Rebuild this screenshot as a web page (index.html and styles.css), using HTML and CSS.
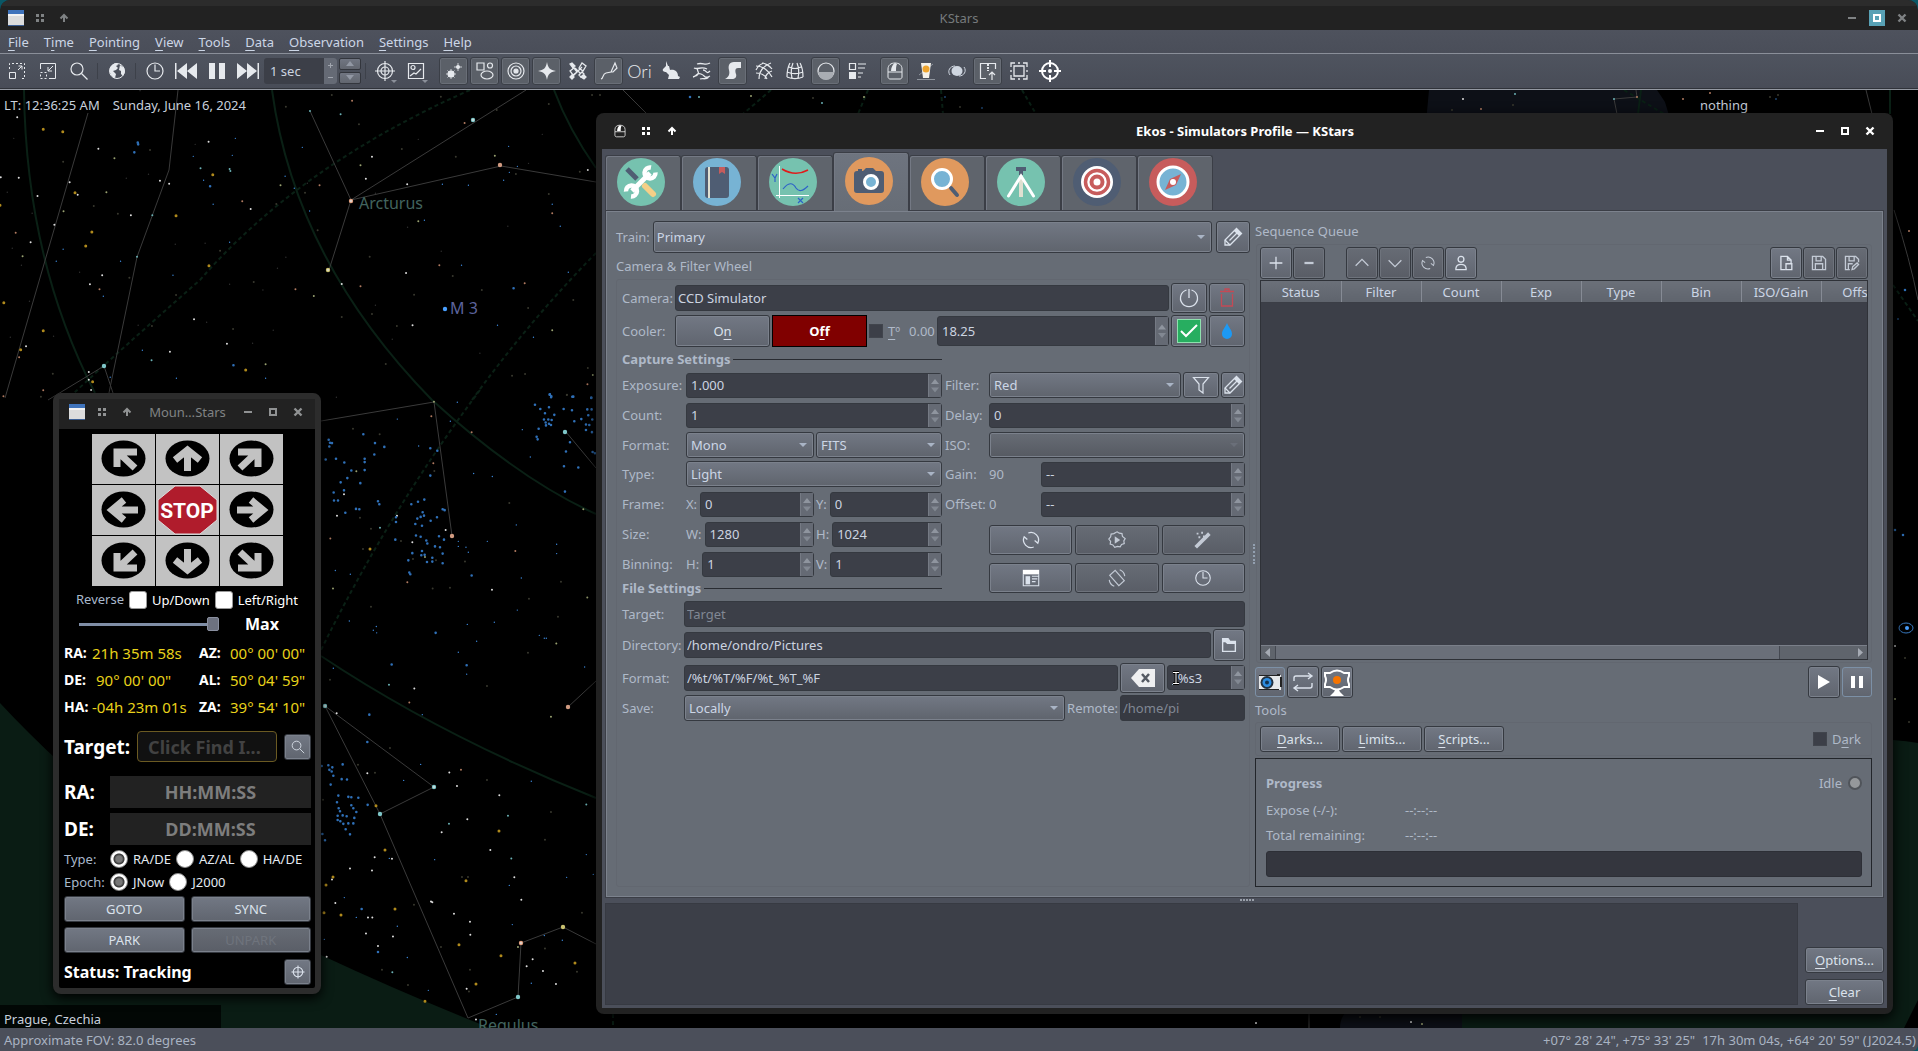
FILE: index.html
```html
<!DOCTYPE html>
<html lang="en">
<head>
<meta charset="utf-8">
<title>KStars</title>
<link rel="stylesheet" href="styles.css">
</head>
<body>
<svg class="defs" aria-hidden="true">
  <symbol id="i-app" viewBox="0 0 16 16"><path fill="#dcdcdc" d="M0 0h16v16H0z"/><path fill="#3f73bb" d="M0 0h16v4H0z"/><path fill="#f2f2f2" d="M0 4h16v2H0z"/><path fill="#3a5d92" d="M0 15h16v1H0z"/></symbol>
  <symbol id="i-dots" viewBox="0 0 16 16"><path fill="currentColor" d="M4 4h3v3H4zM9 4h3v3H9zM4 9h3v3H4zM9 9h3v3H9z"/></symbol>
  <symbol id="i-up" viewBox="0 0 16 16"><path fill="none" stroke="currentColor" stroke-width="2" d="M8 12V5M4.500 8.500 8 5l3.500 3.500"/></symbol>
  <symbol id="i-min" viewBox="0 0 16 16"><path fill="currentColor" d="M4 7h8v2H4z"/></symbol>
  <symbol id="i-max" viewBox="0 0 16 16"><path fill="none" stroke="currentColor" stroke-width="2" d="M5 5h6v6H5z"/></symbol>
  <symbol id="i-close" viewBox="0 0 16 16"><path fill="none" stroke="currentColor" stroke-width="2.400" d="m4.500 4.500 7 7m0-7-7 7"/></symbol>
  <symbol id="i-dome" viewBox="0 0 22 22"><path fill="none" stroke="currentColor" d="M4 12V9c0-4 3-6 7-6s7 2 7 6v8c0 1-1 2-2 2H6c-1 0-2-1-2-2zh14"/><path fill="currentColor" d="M7 11c0-4 2-7 4-8l2 1c-1 2-1 4-1 7z"/></symbol>
  <symbol id="i-search" viewBox="0 0 22 22"><g fill="none" stroke="currentColor" stroke-width="1.200"><circle cx="9" cy="9" r="6"/><path d="m13.500 13.500 6 6"/></g></symbol>
  <symbol id="i-clock" viewBox="0 0 22 22"><g fill="none" stroke="currentColor" stroke-width="1.200"><circle cx="11" cy="11" r="8"/><path d="M11 4.500V11h5"/></g></symbol>
  <symbol id="i-refresh" viewBox="0 0 22 22"><g fill="none" stroke="currentColor" stroke-width="1.400"><path d="M8 3.300A8.300 8.300 0 0 1 18.500 14.500L15 11.500M14 18.700A8.300 8.300 0 0 1 3.500 7.500L7 10.500"/></g></symbol>
  <symbol id="i-pencil" viewBox="0 0 22 22"><g fill="none" stroke="currentColor" stroke-width="1.300"><path d="M3 19v-5L14.500 2.500l5 5L8 19z"/><path d="M3 14l5 5M7.500 14.500l8.500-8.500"/></g><path fill="currentColor" d="m12 5 2.500-2.500 5 5L17 10z"/></symbol>
  <symbol id="i-spin" viewBox="0 0 10 22"><path fill="currentColor" d="m5 4.500 4 5H1z"/><path fill="currentColor" opacity=".7" d="m5 18 4-5H1z"/></symbol>
  <symbol id="i-arrow" viewBox="0 0 63 50"><path fill="#c2c2c2" d="M0 0h63v50H0z"/><ellipse cx="31.500" cy="24.500" rx="22" ry="18"/></symbol>
  <symbol id="i-shaft" viewBox="0 0 63 50"><path fill="none" stroke="#c2c2c2" stroke-width="7" d="M31.500 37V16M19 26l12.500-10L44 26"/></symbol>
  <symbol id="i-diag" viewBox="0 0 63 50"><path fill="none" stroke="#c2c2c2" stroke-width="7" d="M43 34 27 19M25 33V18h20"/></symbol>
  <symbol id="i-target" viewBox="0 0 22 22"><g fill="none" stroke="currentColor" stroke-width="1.200"><circle cx="11" cy="11" r="7.500"/><circle cx="11" cy="11" r="4"/><path d="M11 1v20M1 11h20"/></g></symbol>
</svg>

<div class="app">
  <header class="titlebar">
    <div class="tb-icons"><svg class="i16"><use href="#i-app"/></svg><svg class="i16"><use href="#i-dots"/></svg><svg class="i16"><use href="#i-up"/></svg></div>
    <h1>KStars</h1>
    <div class="tb-buttons">
      <button aria-label="Minimize"><svg class="i16"><use href="#i-min"/></svg></button>
      <button class="hot" aria-label="Maximize"><svg class="i16"><use href="#i-max"/></svg></button>
      <button aria-label="Close"><svg class="i16"><use href="#i-close"/></svg></button>
    </div>
  </header>

  <nav class="menubar">
    <a href="#"><u>F</u>ile</a><a href="#">T<u>i</u>me</a><a href="#"><u>P</u>ointing</a><a href="#"><u>V</u>iew</a><a href="#"><u>T</u>ools</a><a href="#"><u>D</u>ata</a><a href="#"><u>O</u>bservation</a><a href="#"><u>S</u>ettings</a><a href="#"><u>H</u>elp</a>
  </nav>

  <div class="toolbar">
    <button aria-label="Zoom in"><svg class="i22" viewBox="0 0 22 22" fill="none" stroke="currentColor"><path stroke-dasharray="2 2" d="M3.500 9V3.500h15v15H14"/><path d="M3.500 12.500h6v6h-6zM12 10l4-4M12.500 6H16v3.500"/></svg></button>
    <button aria-label="Zoom out"><svg class="i22" viewBox="0 0 22 22" fill="none" stroke="currentColor"><path d="M3.500 9V3.500h15v15H12M16 6l-5 5M11 7v4h4"/><path stroke-dasharray="2 2" d="M3.500 12.500h6v6h-6z"/></svg></button>
    <button aria-label="Find"><svg class="i22"><use href="#i-search"/></svg></button>
    <i class="sep"></i>
    <button aria-label="Location"><svg class="i22" viewBox="0 0 22 22"><circle cx="11" cy="11" r="7.500" fill="none" stroke="currentColor"/><path fill="currentColor" d="M4 8c1-3 4-5 7-5l1 2-2 1 2 2-2 2-3 1 3 3-1 4C5 17 3 12 4 8zM14 5l4 3 1 4-2 4-2-2v-3l-2-1z"/></svg></button>
    <i class="sep"></i>
    <button aria-label="Set time"><svg class="i22"><use href="#i-clock"/></svg></button>
    <button aria-label="Step back"><svg class="i24" viewBox="0 0 24 24" fill="currentColor"><path d="M1 4h1.500v16H1zM13 4v16L3 12zM23 4v16l-10-8z"/></svg></button>
    <button aria-label="Pause clock"><svg class="i24" viewBox="0 0 24 24" fill="currentColor"><path d="M4 4h6v16H4zM14 4h6v16h-6z"/></svg></button>
    <button aria-label="Step forward"><svg class="i24" viewBox="0 0 24 24" fill="currentColor"><path d="M21.500 4H23v16h-1.500zM11 4v16l10-8zM1 4v16l10-8z"/></svg></button>
    <div class="timestep"><input aria-label="Time step" value="1 sec"><svg viewBox="0 0 13 28"><path fill="#656a75" d="M0 0h13v28H0z"/><path stroke="#a0a5ae" d="M4 7.500h5M6.500 5v5M4 19.500h5"/></svg></div>
    <div class="stepbtns"><button aria-label="Longer step"><svg viewBox="0 0 8 5"><path d="m4 0 4 5H0z"/></svg></button><button aria-label="Shorter step"><svg viewBox="0 0 8 5"><path d="m4 5 4-5H0z"/></svg></button></div>
    <i class="sep"></i>
    <button class="more" aria-label="Telescope"><svg class="i22"><use href="#i-target"/></svg></button>
    <button class="more" aria-label="Image"><svg class="i22" viewBox="0 0 22 22" fill="none" stroke="currentColor" stroke-width="1.200"><path d="M3.500 3.500h15v15h-15zM5 16l4-3 2 1 5-5"/><circle cx="8" cy="7.500" r="2"/></svg></button>
    <i class="sep clear"></i>
    <button class="on" aria-label="Stars"><svg class="i22" viewBox="0 0 22 22" fill="currentColor"><circle cx="8" cy="14" r="3.500"/><circle cx="15" cy="7" r="2"/><path fill="none" stroke="currentColor" stroke-width=".800" d="M8 9v10M3 14h10M4.500 10.500l7 7m0-7-7 7M15 3v8M11 7h8"/></svg></button>
    <button class="on" aria-label="Deep sky"><svg class="i22" viewBox="0 0 22 22" fill="none" stroke="currentColor" stroke-width="1.200"><path d="M3 3h7v7H3z"/><circle cx="16" cy="5.500" r="2.500"/><ellipse cx="13" cy="15" rx="6" ry="4"/></svg></button>
    <button class="on" aria-label="Solar system"><svg class="i22" viewBox="0 0 22 22" fill="none" stroke="currentColor" stroke-width="1.200"><circle cx="11" cy="11" r="8"/><circle cx="11" cy="11" r="5"/><circle cx="11" cy="11" r="2" fill="currentColor"/></svg></button>
    <button class="on" aria-label="Supernovae"><svg class="i22" viewBox="0 0 22 22" fill="currentColor"><path d="M11 2c1 6 3 8 9 9-6 1-8 3-9 9-1-6-3-8-9-9 6-1 8-3 9-9z"/></svg></button>
    <button aria-label="Satellites"><svg class="i22" viewBox="0 0 22 22" fill="none" stroke="currentColor" stroke-width="1.300"><path d="m6 16 9-9M8 8l6 6M3 11l4-3 3 4-4 3zM12 8l3-5 4 3-3 5zM12 15l3-3 2 2-3 3z"/><path fill="currentColor" d="M3 4l2-1 3 3-2 2zM14 17l3-2 2 2-2 2zM3 17l2-2 2 2-2 2z"/></svg></button>
    <button class="on" aria-label="Constellation lines"><svg class="i22" viewBox="0 0 22 22" fill="none" stroke="currentColor" stroke-width="1.200"><path d="M3 19c3-1 1-5 5-6l5-1 4-9 2 5-4 4-2 0"/></svg></button>
    <button class="word" aria-label="Constellation names">Ori</button>
    <button aria-label="Constellation art"><svg class="i22" viewBox="0 0 22 22" fill="currentColor"><path d="M6 1l2 5 1 0 1 4c5-1 8 2 8 6l2 1-1 2H8l1-4-3-3c-2 0-4-1-3-3l3-3z"/></svg></button>
    <button aria-label="Boundaries"><svg class="i22" viewBox="0 0 22 22" fill="none" stroke="currentColor" stroke-width="1.300"><path d="M6 4c6-2 8 2 13-1M3 8c4 2 7-2 13 1M7 8c-3 3 4 4-2 8M2 17c5-1 3-5 8-3s3 5 9 2M12 10c4 0 3 5 7 1M9 19c3-1 6 1 9-2"/></svg></button>
    <button class="on" aria-label="Milky way"><svg class="i22" viewBox="0 0 22 22" fill="currentColor"><path d="M3 19c4-2 5-5 4-9s0-8 5-8h7v6h-3c-3 0-3 3-2 6s-1 5-4 5z"/></svg></button>
    <button aria-label="Equatorial grid"><svg class="i22" viewBox="0 0 22 22" fill="none" stroke="currentColor" stroke-width="1.200"><path d="M3 6c7 0 13 5 16 11M3 13c5 0 9 2 11 6M9 3c3 0 8 3 10 6M6 19C6 12 10 6 18 3M3 10c2-4 4-6 8-7M12 19c0-3 3-7 7-8"/></svg></button>
    <button aria-label="Horizontal grid"><svg class="i22" viewBox="0 0 22 22" fill="none" stroke="currentColor" stroke-width="1.200"><path d="M3 17C3 8 5 5 6 3M19 17c0-9-2-12-3-14M3 17c5 2 11 2 16 0M3 12c5 2 11 2 16 0M5 7c4 2 8 2 12 0M9 3C7 8 7 14 8 18M13 3c2 5 2 11 1 15"/></svg></button>
    <button class="on" aria-label="Ground"><svg class="i22" viewBox="0 0 22 22"><circle cx="11" cy="11" r="8" fill="none" stroke="currentColor" stroke-width="1.200"/><path fill="#a9adb3" d="M3 12h16a8 8 0 0 1-16 0z"/></svg></button>
    <button aria-label="What is up"><svg class="i22" viewBox="0 0 22 22"><path fill="none" stroke="currentColor" stroke-width="1.200" d="M3.500 3.500h6v6h-6zM12 4h8M12 8h7M12 13h5M12 17h3"/><path fill="currentColor" d="M3 12h7v7H3z"/></svg></button>
    <i class="sep clear"></i>
    <button class="on" aria-label="Ekos"><svg class="i22"><use href="#i-dome"/></svg></button>
    <button aria-label="XPlanet"><svg class="i22" viewBox="0 0 22 22"><path stroke="#8f959e" fill="none" d="M4 15 18 4M2 19.500h18"/><path fill="#f4f1ea" d="M6 3h10l-2 15H8z"/><circle cx="11" cy="9" r="3.500" fill="#efa52f"/></svg></button>
    <button aria-label="Galaxy"><svg class="i22" viewBox="0 0 22 22"><ellipse cx="11" cy="11" rx="5.500" ry="5" fill="#cfd6e0"/><path fill="none" stroke="#cfd6e0" d="M4 15c-3-4 0-9 5-9M18 7c3 4 0 9-5 9"/></svg></button>
    <button class="on" aria-label="Export"><svg class="i22" viewBox="0 0 22 22" fill="none" stroke="currentColor" stroke-width="1.200"><path d="M9 18.500H3.500v-15h15V9M15 20v-8M12 15l3-3 3 3"/><path stroke-dasharray="2 1" stroke-width="2" d="M11 4v7"/></svg></button>
    <button aria-label="Field of view"><svg class="i22" viewBox="0 0 22 22" fill="none" stroke="currentColor" stroke-width="1.300"><path d="M6 6h10v10H6zM3 7V3h4M15 3h4v4M19 15v4h-4M7 19H3v-4M10 3h2M10 19h2M3 10v2M19 10v2"/></svg></button>
    <button aria-label="Center"><svg class="i24" viewBox="0 0 24 24" fill="none" stroke="#fff" stroke-width="2"><circle cx="12" cy="12" r="8"/><path d="M12 1v7M12 16v7M1 12h7M16 12h7"/><circle cx="12" cy="12" r="1" fill="#fff"/></svg></button>
  </div>

  <main class="sky">
    <svg class="map" viewBox="0 90 1918 938" preserveAspectRatio="xMinYMin slice" aria-hidden="true">
      <path fill="#0a1c14" d="M0 703Q50 757 120 815 220 895 321 955 400 992 490 1028H0zM1422 1028 1500 740h393q14 1 25 3v257l-14 28z"/>
      <path fill="#0d1017" d="M1429 90h228l8 12 6 20h-245zM1340 1028q0-14 12-20h110v20z"/>
      <path fill="#000" opacity=".75" d="M0 1005h221v23H0z"/>
      <g fill="none" stroke="#0a2015" stroke-width="2">
        <path d="M24 90Q26 260 95 393M272 90Q295 260 432 400 520 480 596 514M554 90q15 40 42 78M321 656q120 80 275 142M1641 90l-3 24M1890 90v24"/>
        <path stroke-dasharray="4 3" d="M470 90Q300 165 200 280 120 350 74 393M596 253Q530 320 472 400M480 390Q390 510 321 650M771 90l-28 24M868 90l-10 24M941 90l2 24M1022 90l14 24M1624 90l40 24M1893 285l25 36M613 1014v14"/>
      </g>
      <g fill="none" stroke="#3a3a3a">
        <path d="M178 90l-9 80-32 87-33 160M88 113 5 398M310 111l41 89-22 70M351 200l175-110M351 200l150-34 95 16M104 366l-56 34M104 366l10 30M623 90l24 24M1894 210q16 50 24 90M1866 90l6 24M1614 99l23-2M1614 99l3 15M1636 90l1 7M1309 1014v14"/>
        <path d="M321 421l113-19 18 134M566 432l30 36M325 706l109 81-54 27-55-108M380 814l88 204 50-21 3-54 42-16 33 17M568 707l28-26"/>
      </g>
      <g transform="translate(0 90) scale(.3827 .3333)" class="dots">
        <path class="w" d="M45 82h0M257 176h0M2 262h0M49 263h0M182 277h0M442 281h0M98 318h0M203 314h0M342 376h0M142 404h0M80 457h0M267 556h0M235 583h0M507 688h0M655 357h0M545 155h0M972 200h0M956 266h0M1064 283h0M1536 240h0M1061 549h0M1078 706h0M893 582h0M593 761h0M444 785h0M68 769h0M232 846h0M232 869h0M238 900h0M418 272h0"/>
        <path class="y" d="M113 118h0M164 125h0M556 254h0M196 308h0M240 426h0M224 468h0M460 377h0M546 527h0M10 638h0M113 722h0M54 779h0M642 840h0M242 875h0M0 346h0"/>
        <path class="g" d="M299 205h0M278 307h0M166 364h0M59 499h0M942 226h0M1293 197h0M1093 394h0M820 618h0M694 823h0M1549 855h0M1443 721h0M733 286h0"/>
        <path class="o" d="M920 32h0M835 286h0M633 334h0M41 428h0M260 598h0M772 598h0M942 589h0M1148 526h0M1371 580h0M1443 370h0M1535 883h0M50 802h0M113 901h0M1214 99h0M9 919h0"/>
        <path class="b" d="M769 295h0M505 199h0M607 196h0M615 145h0M790 172h0M745 259h0M532 271h0M557 343h0M809 363h0M1329 169h0M1352 229h0M1331 247h0M1316 271h0M1156 283h0M1224 286h0M1109 391h0M1206 526h0M1485 547h0M1443 343h0M1464 409h0M1300 706h0M1394 742h0M165 478h0M147 514h0M315 514h0M270 619h0M452 556h0M372 781h0M461 865h0M694 865h0M600 457h0M288 862h0"/>
        <path class="c" d="M360 158h0M361 163h0M351 187h0M549 289h0M610 826h0M1342 595h0M1437 913h0M1440 922h0M1498 920h0M1545 924h0"/>
        <path class="t" d="M810 63h0M890 73h0M524 235h0M602 243h0M398 376h0M358 500h0M396 811h0M600 237h0"/>
        <path class="d" d="M165 215h0M392 180h0M245 348h0M308 371h0M722 342h0M797 308h0M830 421h0M938 103h0M1050 177h0M1152 20h0M1191 200h0M1298 60h0M1348 252h0M1434 42h0M1434 312h0M1515 245h0M966 500h0M1183 558h0M1082 614h0M1259 600h0M893 681h0M972 672h0M1037 708h0M1008 822h0M1338 857h0M1372 852h0M1380 654h0M1498 630h0M1481 915h0M663 576h0M575 482h0M609 717h0M397 708h0M460 615h0M338 563h0M138 851h0M107 920h0M747 50h0M867 15h0M1536 834h0M1547 15h0"/>
        <path class="f" d="M36 145h0M330 265h0M510 163h0M388 253h0M458 463h0M536 460h0M725 535h0M747 502h0M687 600h0M540 697h0M714 721h0M660 760h0M600 583h0M208 547h0M84 370h0M19 307h0M32 475h0M56 526h0M77 634h0M27 742h0M140 739h0M361 706h0M1065 412h0M1153 484h0M981 646h0M1025 748h0M1327 409h0M1381 220h0M1417 133h0M1093 148h0M803 280h0M366 2h0M981 310h0M879 922h0M1254 790h0"/>
      </g>
      <g transform="translate(310 390) scale(.3333 .4216)" class="dots">
        <path class="w" d="M102 247h0M81 298h0M261 298h0M307 361h0M407 332h0M546 474h0M313 708h0M80 767h0M172 909h0M418 907h0M441 939h0M568 961h0M472 1018h0M395 1049h0M541 1091h0M194 1108h0M246 1112h0M120 1135h0M186 1140h0M66 1161h0M613 1156h0M634 1209h0M76 1217h0M363 1213h0M367 1215h0M432 1242h0M174 1251h0M187 1251h0M480 1261h0M168 1289h0M481 1292h0M249 1296h0M204 1319h0M50 1344h0M668 1350h0M650 1367h0M699 1378h0M738 1409h0M470 1420h0M498 1493h0"/>
        <path class="y" d="M180 377h0M198 986h0M225 1091h0M567 1046h0M468 1164h0M69 1155h0M48 1174h0M42 1240h0M93 1245h0M255 1231h0M447 1316h0M573 1342h0M795 1359h0M498 1409h0M345 1450h0"/>
        <path class="g" d="M69 471h0M345 396h0M372 28h0M139 193h0M739 601h0M723 775h0M820 283h0M832 492h0M624 1321h0"/>
        <path class="o" d="M364 62h0M370 174h0M485 100h0M61 352h0M292 456h0M616 382h0M298 741h0M453 901h0"/>
        <path class="t" d="M210 327h0M237 699h0M417 1029h0M594 1010h0M829 983h0M604 1111h0M247 1381h0"/>
        <path class="c" d="M56 118h0M60 125h0M58 134h0M66 126h0M160 105h0M195 126h0M223 135h0M47 165h0M78 163h0M193 153h0M164 163h0M164 171h0M103 172h0M164 190h0M124 191h0M112 209h0M92 219h0M151 221h0M102 238h0M71 243h0M72 262h0M84 262h0M138 282h0M148 283h0M106 291h0M204 264h0M208 271h0M361 138h0M382 144h0M361 203h0M304 271h0M343 260h0M324 265h0M338 290h0M342 298h0M322 305h0M332 301h0M316 318h0M336 322h0M362 310h0M381 302h0M398 283h0M404 285h0M258 313h0M258 302h0M256 355h0M318 345h0M332 348h0M349 357h0M352 364h0M387 347h0M402 355h0M375 371h0M390 373h0M307 387h0M336 382h0M334 392h0M344 391h0M367 398h0M398 388h0M295 404h0M351 408h0M367 407h0M398 411h0M298 433h0M301 437h0M485 440h0M377 576h0M245 651h0M470 653h0M178 770h0M172 835h0M719 11h0M724 15h0M787 16h0M844 18h0M675 35h0M717 41h0M691 45h0M761 45h0M786 48h0M832 46h0M845 46h0M705 55h0M733 59h0M835 60h0M702 70h0M715 70h0M725 71h0M707 77h0M717 80h0M708 84h0M723 83h0M686 92h0M793 74h0M814 69h0M847 70h0M828 82h0M838 83h0M828 95h0M846 100h0M680 111h0M683 117h0M780 124h0M768 146h0M848 147h0M855 150h0M762 181h0M805 184h0M765 241h0M35 892h0M55 890h0M67 895h0M58 901h0M65 905h0M70 915h0M98 888h0M95 923h0M111 924h0M62 936h0M85 962h0M115 965h0M124 966h0M145 967h0M81 978h0M173 984h0M124 985h0M86 992h0M90 999h0M130 992h0M139 1001h0M98 1009h0M83 1010h0M110 1011h0M133 1015h0M83 1020h0M91 1023h0M100 1029h0M115 1028h0M130 1028h0M107 1042h0M120 1054h0M37 1053h0M45 1068h0M155 1231h0M204 1333h0"/>
        <path class="b" d="M76 428h0M121 437h0M491 198h0M547 205h0M619 320h0M532 359h0M445 359h0M445 371h0M468 373h0M475 385h0M740 366h0M740 388h0M634 446h0M622 522h0M553 551h0M472 556h0M500 596h0M445 622h0M688 582h0M703 589h0M709 589h0M470 674h0M824 657h0M337 770h0M332 888h0M281 926h0M664 928h0M829 1102h0M770 1156h0M598 1175h0M374 1114h0M238 1111h0M103 1204h0M139 1251h0M262 1272h0M43 1303h0M292 1346h0M355 1424h0M607 1268h0M703 1294h0M757 1305h0M850 1149h0M664 1407h0M559 1481h0M199 561h0M190 570h0M200 576h0M118 548h0M262 69h0M326 133h0M442 29h0M661 159h0M637 94h0M70 660h0M421 74h0"/>
        <path class="d" d="M129 92h0M209 105h0M183 329h0M159 377h0M150 303h0M183 514h0M273 358h0M309 401h0M378 404h0M368 471h0M420 469h0M465 407h0M598 268h0M657 495h0M753 455h0M744 538h0M654 623h0M531 702h0M60 687h0M240 849h0M144 889h0M195 908h0M531 925h0M705 1067h0M723 1001h0M456 1155h0M474 1155h0M312 1221h0M393 1321h0M216 1375h0M480 1375h0M294 1411h0M477 1427h0M705 1325h0M801 1380h0M816 1240h0M771 11h0M373 192h0M39 972h0"/>
      </g>
      <g class="stars">
        <path stroke="#e0a080" d="M351 201h0M521 943h0"/><path stroke="#7ec6c8" d="M473 120h0M104 366h0M565 432h0M325 706h0M434 787h0M380 814h0M518 997h0"/><path stroke="#c8c070" d="M328 270h0M563 927h0"/><path stroke="#4aa0ff" d="M445 309h0"/><path stroke="#d09a80" d="M500 165h0M452 536h0M568 707h0"/>
      </g>
      <g class="dots"><path class="w" d="M351 201h0M473 120h0M521 943h0M325 706h0M434 787h0M328 270h0M1463 99h0M1256 1023h0"/><path class="t" d="M699 97h0M822 103h0M1614 99h0M1515 94h0"/><path class="g" d="M864 97h0M751 96h0M1422 1024h0M1895 699h0"/><path class="o" d="M1481 109h0M1637 97h0M1683 99h0M1710 93h0M1909 231h0"/><path class="c" d="M690 97h0M1905 290h0M1903 535h0M1895 530h0"/><path class="b" d="M945 97h0M982 108h0M1776 99h0M1898 319h0"/><path class="d" d="M813 98h0M600 95h0M960 107h0M1452 110h0M1513 105h0M1770 97h0M1778 95h0M1905 658h0M1909 722h0M1380 1017h0M1360 1017h0"/><path class="w" d="M1895 646h0M1411 1022h0"/></g>
      <ellipse cx="1906" cy="628" rx="7" ry="5" fill="none" stroke="#3a7cc4"/><circle cx="1907" cy="628" r="2" fill="#4aa0ff"/>
      <g class="names"><text x="359" y="209" fill="#42645f">Arcturus</text><text x="450" y="314" fill="#5c639c">M 3</text><text x="478" y="1031" fill="#42645f">Regulus</text></g>
    </svg>

    <div class="info"><span>LT: 12:36:25 AM</span><span>Sunday, June 16, 2024</span></div>
    <div class="focus">nothing</div>
    <div class="place">Prague, Czechia</div>

    <section class="mount">
      <header>
        <svg class="i16"><use href="#i-app"/></svg><svg class="i16"><use href="#i-dots"/></svg><svg class="i16"><use href="#i-up"/></svg>
        <h2>Moun…Stars</h2>
        <button aria-label="Minimize"><svg class="i16"><use href="#i-min"/></svg></button><button aria-label="Maximize"><svg class="i16"><use href="#i-max"/></svg></button><button aria-label="Close"><svg class="i16"><use href="#i-close"/></svg></button>
      </header>
      <div class="mbody">
        <div class="pad">
          <button aria-label="Up left"><svg viewBox="0 0 63 50"><use href="#i-arrow"/><use href="#i-diag"/></svg></button>
          <button aria-label="Up"><svg viewBox="0 0 63 50"><use href="#i-arrow"/><use href="#i-shaft"/></svg></button>
          <button aria-label="Up right"><svg viewBox="0 0 63 50"><use href="#i-arrow"/><g transform="matrix(-1 0 0 1 63 0)"><use href="#i-diag"/></g></svg></button>
          <button aria-label="Left"><svg viewBox="0 0 63 50"><use href="#i-arrow"/><path class="arr" d="M46 25H20M32 15 20 25l12 10"/></svg></button>
          <button aria-label="Stop"><svg viewBox="0 0 63 50"><path fill="#c2c2c2" d="M0 0h63v50H0z"/><path fill="#b01c2c" stroke="#ddd" d="M19 1h25l17 14v20L44 49H19L2 35V15z"/><text x="31" y="33" class="stop">STOP</text></svg></button>
          <button aria-label="Right"><svg viewBox="0 0 63 50"><use href="#i-arrow"/><path class="arr" d="M17 25h26M31 15l12 10-12 10"/></svg></button>
          <button aria-label="Down left"><svg viewBox="0 0 63 50"><use href="#i-arrow"/><g transform="matrix(1 0 0 -1 0 50)"><use href="#i-diag"/></g></svg></button>
          <button aria-label="Down"><svg viewBox="0 0 63 50"><use href="#i-arrow"/><g transform="matrix(1 0 0 -1 0 50)"><use href="#i-shaft"/></g></svg></button>
          <button aria-label="Down right"><svg viewBox="0 0 63 50"><use href="#i-arrow"/><g transform="matrix(-1 0 0 -1 63 50)"><use href="#i-diag"/></g></svg></button>
        </div>
        <div class="reverse"><span>Reverse</span><label><input type="checkbox">Up/Down</label><label><input type="checkbox">Left/Right</label></div>
        <div class="speed"><input type="range" aria-label="Slew speed" min="0" max="9" value="9"><b>Max</b></div>
        <dl class="coords">
          <dt>RA:</dt><dd>21h 35m 58s</dd><dt>AZ:</dt><dd>00° 00' 00"</dd>
          <dt>DE:</dt><dd class="mid">90° 00' 00"</dd><dt>AL:</dt><dd>50° 04' 59"</dd>
          <dt>HA:</dt><dd>-04h 23m 01s</dd><dt>ZA:</dt><dd>39° 54' 10"</dd>
        </dl>
        <div class="mtarget"><label for="mt">Target:</label><input id="mt" placeholder="Click Find I..."><button class="btn sq" aria-label="Find"><svg class="i16"><use href="#i-search"/></svg></button></div>
        <div class="mcoord"><label for="mra">RA:</label><input id="mra" placeholder="HH:MM:SS"></div>
        <div class="mcoord"><label for="mde">DE:</label><input id="mde" placeholder="DD:MM:SS"></div>
        <div class="radios"><span>Type:</span><label><input type="radio" name="ty" checked>RA/DE</label><label><input type="radio" name="ty">AZ/AL</label><label><input type="radio" name="ty">HA/DE</label></div>
        <div class="radios"><span>Epoch:</span><label><input type="radio" name="ep" checked>JNow</label><label><input type="radio" name="ep">J2000</label></div>
        <div class="mbtns"><button class="btn">GOTO</button><button class="btn">SYNC</button><button class="btn">PARK</button><button class="btn" disabled>UNPARK</button></div>
        <div class="mstatus"><b>Status: Tracking</b><button class="btn sq" aria-label="Center on mount"><svg class="i16" viewBox="0 0 22 22" fill="none" stroke="currentColor" stroke-width="1.500"><circle cx="11" cy="11" r="6.500"/><path d="M11 2v18M2 11h18"/></svg></button></div>
      </div>
    </section>

    <section class="ekos">
      <header>
        <div class="tb-icons"><svg class="i16"><use href="#i-dome"/></svg><svg class="i16"><use href="#i-dots"/></svg><svg class="i16"><use href="#i-up"/></svg></div>
        <h2>Ekos - Simulators Profile — KStars</h2>
        <div class="tb-buttons"><button aria-label="Minimize"><svg class="i16"><use href="#i-min"/></svg></button><button aria-label="Maximize"><svg class="i16"><use href="#i-max"/></svg></button><button aria-label="Close"><svg class="i16"><use href="#i-close"/></svg></button></div>
      </header>
      <div class="ebody">
        <div class="tabs">
          <button aria-label="Setup"><svg viewBox="0 0 48 48"><circle cx="24" cy="24" r="24" fill="#76c2af"/><path stroke="#4f5d73" stroke-width="5" d="m10 11 10 10"/><path stroke="#f5cf87" stroke-width="6" stroke-linecap="round" d="m28 28 8 8"/><path stroke="#fff" stroke-width="5" d="M15 33 33 15"/><path stroke="#fff" stroke-width="4.500" fill="none" d="M34 9.500a5.500 5.500 0 1 0 4.500 5M14 38.500a5.500 5.500 0 1 0-5-5"/></svg></button>
          <button aria-label="Scheduler"><svg viewBox="0 0 48 48"><circle cx="24" cy="24" r="24" fill="#77b3d4"/><rect x="12" y="9" width="24" height="31" rx="3" fill="#4f5d73"/><path fill="#e0e0d1" d="M15 9h2v31h-2z"/><path fill="#c75c5c" d="M26 9h6v7l-3-2-3 2z"/></svg></button>
          <button aria-label="Analyze"><svg viewBox="0 0 48 48"><circle cx="24" cy="24" r="24" fill="#76c2af"/><path fill="none" stroke="#fff" d="M10.500 8v32M7 37.500h33"/><path fill="none" stroke="#e01b1b" stroke-width="1.500" d="M13 11q13 8 26 1"/><path fill="none" stroke="#2d62c8" stroke-width="1.200" d="M14 31q8-10 13-1 4 6 12-2M3 16l3 4 2-4M6 20v4M29 40l5 5m0-5-5 5"/></svg></button>
          <button class="sel" aria-label="Capture"><svg viewBox="0 0 48 48"><circle cx="24" cy="24" r="24" fill="#e0995e"/><path fill="#4f5d73" d="M9 17q0-3 3-3h1v-2h4v2h1l3-3h7l3 3h5q3 0 3 3v16q0 3-3 3H12q-3 0-3-3z"/><circle cx="26" cy="25" r="6.500" fill="#77b3d4" stroke="#fff" stroke-width="3"/></svg></button>
          <button aria-label="Focus"><svg viewBox="0 0 48 48"><circle cx="24" cy="24" r="24" fill="#e0995e"/><path stroke="#4f5d73" stroke-width="4" stroke-linecap="round" d="m30 30 6 7"/><circle cx="21" cy="21" r="9.500" fill="#77b3d4" stroke="#fff" stroke-width="3"/></svg></button>
          <button aria-label="Mount"><svg viewBox="0 0 48 48"><circle cx="24" cy="24" r="24" fill="#76c2af"/><path fill="#4f5d73" d="M19 9h10v4h-3v4h-4v-4h-3z"/><path stroke="#e0e0d1" stroke-width="4" d="M24 21v18"/><path fill="none" stroke="#fff" stroke-width="3" stroke-linecap="round" d="M11.500 38 24 18l12.500 20"/></svg></button>
          <button aria-label="Align"><svg viewBox="0 0 48 48"><circle cx="24" cy="24" r="24" fill="#4f5d73"/><circle cx="24" cy="24" r="16" fill="#fff"/><circle cx="24" cy="24" r="11.500" fill="none" stroke="#c75c5c" stroke-width="3.500"/><circle cx="24" cy="24" r="5.500" fill="none" stroke="#c75c5c" stroke-width="4"/></svg></button>
          <button aria-label="Guide"><svg viewBox="0 0 48 48"><circle cx="24" cy="24" r="24" fill="#c75c5c"/><circle cx="24" cy="24" r="15" fill="#77b3d4" stroke="#fff" stroke-width="3"/><path fill="#c75c5c" d="m32 16-5 11-3-3zM32 16l-11 5 3 3zM16 32l5-11 6 6z"/><circle cx="24" cy="24" r="3" fill="#fff"/></svg></button>
        </div>

        <div class="pane">
          <div class="capture">
            <div class="row train"><label for="train">Train:</label><span class="drop tall grow"><select id="train"><option>Primary</option></select></span><button class="btn tall w34" aria-label="Edit train"><svg class="i22"><use href="#i-pencil"/></svg></button></div>
            <h3>Camera &amp; Filter Wheel</h3>
            <div class="box cam">
              <div class="row camera"><label for="cam">Camera:</label><input id="cam" class="grow" value="CCD Simulator"><button class="btn w36 h30" aria-label="Reset"><svg class="i22" viewBox="0 0 22 22" fill="none" stroke="currentColor" stroke-width="1.300"><path d="M8.500 3a8.500 8.500 0 1 0 5 0M11 2v9"/></svg></button><button class="btn w36 h30" aria-label="Clear"><svg class="i22 red" viewBox="0 0 22 22" fill="none" stroke="currentColor" stroke-width="1.300"><path d="M5.500 7v12h11V7M4 4.500h14M9 4V2h4v2"/></svg></button></div>
              <div class="row cooler"><span class="lab">Cooler:</span><button class="btn tall w95">O<u>n</u></button><button class="off w95">O<u>f</u>f</button><label class="chk"><input type="checkbox"><span><u>T</u>º</span></label><span class="temp">0.00</span><span class="spin grow h30"><input aria-label="Temperature" value="18.25"><svg><use href="#i-spin"/></svg></span><button class="btn tall w36" aria-label="Regulate"><svg class="i24" viewBox="0 0 24 24"><rect x=".500" y=".500" width="23" height="23" fill="#27ae60" stroke="#8fe0ae"/><path fill="none" stroke="#fff" stroke-width="2" d="m4 12 5 5L20 6"/></svg></button><button class="btn tall w36" aria-label="Humidity"><svg class="i22" viewBox="0 0 22 22"><path fill="#1d99f3" d="M11 3c2 5 5 7 5 11a5 5 0 0 1-10 0c0-4 3-6 5-11z"/></svg></button></div>
              <h4 class="half">Capture Settings</h4>
              <div class="settings">
                <div class="form">
                  <label for="exp">Exposure:</label><span class="spin"><input id="exp" value="1.000"><svg><use href="#i-spin"/></svg></span>
                  <label for="cnt">Count:</label><span class="spin"><input id="cnt" value="1"><svg><use href="#i-spin"/></svg></span>
                  <label for="fmt">Format:</label><span class="pair"><span class="drop"><select id="fmt"><option>Mono</option></select></span><span class="drop"><select aria-label="Encoding"><option>FITS</option></select></span></span>
                  <label for="typ">Type:</label><span class="drop"><select id="typ"><option>Light</option></select></span>
                  <span>Frame:</span><span class="pair"><label>X:<span class="spin"><input value="0"><svg><use href="#i-spin"/></svg></span></label><label>Y:<span class="spin"><input value="0"><svg><use href="#i-spin"/></svg></span></label></span>
                  <span>Size:</span><span class="pair"><label>W:<span class="spin"><input value="1280"><svg><use href="#i-spin"/></svg></span></label><label>H:<span class="spin"><input value="1024"><svg><use href="#i-spin"/></svg></span></label></span>
                  <span>Binning:</span><span class="pair"><label>H:<span class="spin"><input value="1"><svg><use href="#i-spin"/></svg></span></label><label>V:<span class="spin"><input value="1"><svg><use href="#i-spin"/></svg></span></label></span>
                </div>
                <div class="form second">
                  <label for="flt">Filter:</label><span class="row"><span class="drop grow"><select id="flt"><option>Red</option></select></span><button class="btn w36" aria-label="Filter settings"><svg class="i22" viewBox="0 0 22 22" fill="none" stroke="currentColor" stroke-width="1.200"><path d="M3.500 3.500h15L13 10v9l-4-3v-6z"/></svg></button><button class="btn w24" aria-label="Edit filter"><svg class="i22"><use href="#i-pencil"/></svg></button></span>
                  <label for="dly">Delay:</label><span class="spin"><input id="dly" value="0"><svg><use href="#i-spin"/></svg></span>
                  <label for="iso">ISO:</label><span class="drop"><select id="iso" disabled><option></option></select></span>
                  <label for="gain">Gain:</label><span class="row gain"><span>90</span><span class="spin grow"><input id="gain" value="--"><svg><use href="#i-spin"/></svg></span></span>
                  <label for="offs">Offset:</label><span class="row gain"><span>0</span><span class="spin grow"><input id="offs" value="--"><svg><use href="#i-spin"/></svg></span></span>
                  <div class="grid6">
                    <button class="btn" aria-label="Reset frame"><svg class="i20"><use href="#i-refresh"/></svg></button>
                    <button class="btn dim" aria-label="Advanced"><svg class="i20" viewBox="0 0 22 22"><path fill="none" stroke="currentColor" stroke-width="1.300" d="m11 2 2.500 1.500 3 .500.500 3L20 9.500 18.500 12l.500 3-3 1-1.500 2.500-3-.500-3 1-2-2.500-3-1 .500-3L2 10l2-2.500.500-3 3-.500z"/><path fill="currentColor" d="m8.500 7 6 4-6 4z"/></svg></button>
                    <button class="btn dim" aria-label="Calibration"><svg class="i20" viewBox="0 0 22 22"><path stroke="currentColor" stroke-width="4" d="M3 19 18 4"/><path fill="currentColor" d="M4 3h2v2H4zM9 2h2v2H9zM6 7h2v2H6zM11 6h2v2h-2z"/></svg></button>
                    <button class="btn" aria-label="FITS header"><svg class="i20" viewBox="0 0 22 22"><path fill="#fff" d="M2 2h18v5H2z"/><path fill="none" stroke="currentColor" stroke-width="1.200" d="M2.500 7v12.500h17V7M12 9h7M12 12h6M12 15h4"/><path fill="currentColor" d="M5 9h5v9H5z"/></svg></button>
                    <button class="btn dim" aria-label="Rotator"><svg class="i20" viewBox="0 0 22 22" fill="none" stroke="currentColor" stroke-width="1.300"><path d="M9 2.500 19 14l-6 5.500L3 8zM14 2q5 2 5.500 7M8 20q-5-2-5.500-7"/></svg></button>
                    <button class="btn" aria-label="Schedule"><svg class="i20"><use href="#i-clock"/></svg></button>
                  </div>
                </div>
              </div>
              <h4 class="half">File Settings</h4>
              <div class="files">
                <label for="tgt">Target:</label><input id="tgt" placeholder="Target">
                <label for="dir">Directory:</label><span class="row"><input id="dir" class="grow" value="/home/ondro/Pictures"><button class="btn tall w32" aria-label="Browse"><svg class="i20" viewBox="0 0 22 22"><path fill="none" stroke="currentColor" stroke-width="1.500" d="M4 18V4h6l2 3h6v11z"/><path fill="currentColor" d="M4 4h6l2 3h6v3H9L7 8H4z"/></svg></button></span>
                <label for="ff">Format:</label><span class="row"><input id="ff" class="grow" value="/%t/%T/%F/%t_%T_%F"><button class="btn h30 w45" aria-label="Reset format"><svg class="i24" viewBox="0 0 24 24"><path fill="#eff0f1" d="M0 12 8 3h16v18H8z"/><path stroke="#555a63" stroke-width="2.500" d="m11 8 7 8m0-8-7 8"/></svg></button><span class="spin w78"><input aria-label="Suffix" value="_%s3"><svg><use href="#i-spin"/></svg><svg class="ibeam" viewBox="0 0 8 14"><path fill="none" stroke="#000" stroke-width="3" d="M1 1.500h6M1 12.500h6M4 1v12"/><path fill="none" stroke="#fff" stroke-width="1" d="M1 1.500h6M1 12.500h6M4 1v12"/></svg></span></span>
                <label for="sv">Save:</label><span class="row"><span class="drop grow"><select id="sv"><option>Locally</option></select></span><label for="rem">Remote:</label><input id="rem" class="w125" placeholder="/home/pi" disabled></span>
              </div>
            </div>
          </div>

          <div class="vsplit"></div>

          <div class="queue">
            <h3>Sequence Queue</h3>
            <div class="box qbox">
              <div class="qtools">
                <button class="btn tall w32" aria-label="Add"><svg class="i20" viewBox="0 0 22 22" stroke="currentColor" stroke-width="1.400"><path d="M11 4v14M4 11h14"/></svg></button>
                <button class="btn dim tall w32" aria-label="Remove"><svg class="i20" viewBox="0 0 22 22" stroke="currentColor" stroke-width="2.500"><path d="M6 11h10"/></svg></button>
                <button class="btn dim tall w32 apart" aria-label="Move up"><svg class="i20" viewBox="0 0 22 22" fill="none" stroke="currentColor" stroke-width="1.400"><path d="m4 14 7-7 7 7"/></svg></button>
                <button class="btn dim tall w32" aria-label="Move down"><svg class="i20" viewBox="0 0 22 22" fill="none" stroke="currentColor" stroke-width="1.400"><path d="m4 8 7 7 7-7"/></svg></button>
                <button class="btn dim tall w32" aria-label="Reset jobs"><svg class="i16"><use href="#i-refresh"/></svg></button>
                <button class="btn tall w32" aria-label="Observer"><svg class="i16" viewBox="0 0 22 22" fill="none" stroke="currentColor" stroke-width="1.800"><circle cx="11" cy="6" r="4"/><path d="M4 20v-2q1-5 7-5t7 5v2z"/></svg></button>
                <span class="grow"></span>
                <button class="btn tall w32" aria-label="Open queue"><svg class="i16" viewBox="0 0 22 22" fill="none" stroke="currentColor" stroke-width="1.800"><path d="M10 20H4V2h9l5 5v4M13 2v5h5M11 12h8v8h-8z"/></svg></button>
                <button class="btn dim tall w32" aria-label="Save queue"><svg class="i16" viewBox="0 0 22 22" fill="none" stroke="currentColor" stroke-width="1.800"><path d="M2 2h14l4 4v14H2zM7 2v6h7V2M6 20v-8h10v8"/></svg></button>
                <button class="btn dim tall w32" aria-label="Save queue as"><svg class="i16" viewBox="0 0 22 22" fill="none" stroke="currentColor" stroke-width="1.800"><path d="M8 20H2V2h14l4 4v4M7 2v6h7V2M6 20v-8h6M11 20l1-4 6-5 2 2-6 6z"/></svg></button>
              </div>
              <div class="qtable">
                <div class="clip"><table><thead><tr><th>Status</th><th>Filter</th><th>Count</th><th>Exp</th><th>Type</th><th>Bin</th><th>ISO/Gain</th><th>Offset</th></tr></thead></table></div>
                <div class="hscroll"><svg viewBox="0 0 14 13"><path d="M9 2v9L4 6.500z"/></svg><span></span><svg viewBox="0 0 14 13"><path d="M5 2v9l5-4.500z"/></svg></div>
              </div>
            </div>
            <div class="qrun">
              <button class="btn flat" aria-label="Preview"><svg class="i24" viewBox="0 0 24 24"><path fill="#e6e8ea" d="M1 5h22v15H1z"/><path fill="#222" d="M1 5h18v1H1zM22 7h2v10h-2zM19 4h3v2h-3zM1 19h20v1H1z"/><circle cx="9" cy="12.500" r="6.500" fill="#223140"/><circle cx="9" cy="12.500" r="4.500" fill="#2d8ce0"/><circle cx="9" cy="12.500" r="2" fill="#12314f"/></svg></button>
              <button class="btn tall w32" aria-label="Loop"><svg class="i24" viewBox="0 0 24 24" fill="none" stroke="currentColor" stroke-width="1.400"><path d="M3 11V8q0-2 2-2h16M17 3l4 3-4 3M21 13v3q0 2-2 2H3M7 15l-4 3 4 3"/></svg></button>
              <button class="btn tall w32" aria-label="Live view"><svg class="i28" viewBox="0 0 28 28"><path fill="none" stroke="#fff" stroke-width="2" d="M2 5h5q7-5 14 0h5v3q-2 4 0 8v3h-5q-7 5-14 0H2v-3q2-4 0-8z"/><path fill="#fff" d="m12 22 4 0 1 2 4 4H7l4-4z"/><circle cx="14" cy="12" r="4" fill="#f67400"/></svg></button>
              <span class="grow"></span>
              <button class="btn tall w32" aria-label="Start"><svg class="i20" viewBox="0 0 20 20"><path fill="#fff" d="m4 3 12 7-12 7z"/></svg></button>
              <button class="btn flat" aria-label="Pause"><svg class="i20" viewBox="0 0 20 20"><path fill="#fff" d="M4 4h4v12H4zM12 4h4v12h-4z"/></svg></button>
            </div>
            <h3>Tools</h3>
            <div class="box tools"><button class="btn"><u>D</u>arks...</button><button class="btn"><u>L</u>imits...</button><button class="btn"><u>S</u>cripts...</button><span class="grow"></span><label class="chk"><input type="checkbox"><span>D<u>a</u>rk</span></label></div>
            <div class="progress">
              <div class="phead"><b>Progress</b><span>Idle</span><i class="led"></i></div>
              <div class="pline"><span>Expose (-/-):</span><span>--:--:--</span></div>
              <div class="pline"><span>Total remaining:</span><span>--:--:--</span></div>
              <div class="bar"></div>
            </div>
          </div>
        </div>

        <div class="hsplit"></div>
        <div class="logrow"><div class="log"></div><div class="logbtns"><button class="btn"><u>O</u>ptions...</button><button class="btn"><u>C</u>lear</button></div></div>
      </div>
    </section>
  </main>

  <footer class="status"><span>Approximate FOV: 82.0 degrees</span><span class="grow"></span><span>+07° 28' 24", +75° 33' 25"</span><span>17h 30m 04s, +64° 20' 59" (J2024.5)</span></footer>
</div>
</body>
</html>
```
FILE: styles.css
```css
* { box-sizing: border-box; }
body { margin: 0; background: #0a5766; font: 13px/18px "Noto Sans", "Open Sans", sans-serif; color: #afb9c8; }
h1, h2, h3, h4, dl, dd { margin: 0; font: inherit; }
button, input, select { font: inherit; color: inherit; margin: 0; padding: 0; border: 0; background: none; border-radius: 0; min-width: 0; }
button { display: flex; align-items: center; justify-content: center; white-space: pre; }
a { color: inherit; text-decoration: none; }
u { text-underline-offset: 3px; text-decoration-thickness: 1px; }
svg { display: block; flex: none; }
.defs { position: absolute; width: 0; height: 0; }
.i16 { width: 16px; height: 16px; }
.i20 { width: 20px; height: 20px; }
.i22 { width: 22px; height: 22px; }
.i24 { width: 24px; height: 24px; }
.i28 { width: 28px; height: 28px; }
.grow { flex: 1; min-width: 0; }

.app { height: 100vh; display: flex; flex-direction: column; overflow: hidden; border-radius: 10px 10px 0 0; }

/* main window frame */
.titlebar { height: 30px; flex: none; border-top: 6px solid #2c2c2c; background: #222; color: #7f8284; display: grid; grid-template-columns: 1fr auto 1fr; align-items: center; padding: 0 8px; }
.titlebar h1 { color: #767a7c; }
.tb-icons, .tb-buttons { display: flex; align-items: center; gap: 10px; }
.tb-buttons { justify-content: flex-end; gap: 9px; }
.titlebar .tb-icons { gap: 8px; }
.titlebar .hot { background: #58a1b5; color: #fff; }
.menubar { height: 24px; flex: none; display: flex; gap: 15px; padding: 0 8px; align-items: center; background: linear-gradient(#4e525d, #4a4e59); border-bottom: 1px solid #8a8f99; color: #ccd6e6; }
.toolbar { height: 36px; flex: none; display: flex; align-items: center; gap: 2px; padding: 0 2px 2px; background: linear-gradient(#4f545f, #484c57); border-bottom: 1px solid #9499a2; box-shadow: inset 0 -1px #30333a; color: #e6e9ed; }
.toolbar > button { width: 29px; height: 28px; flex: none; }
.toolbar .on { background: #5b6068; border: 1px solid #3b3f47; border-radius: 3px; box-shadow: inset 0 0 0 1px #696e77; }
.sep { width: 1px; height: 16px; margin: 0 2px; background: #3d414a; }
.sep.clear { background: none; }
.toolbar .word { font: 300 18px/22px Lato, sans-serif; }
.more { position: relative; }
.more::after { content: ""; position: absolute; right: 2px; bottom: 2px; border: 3px solid transparent; border-top-color: #8b909a; border-bottom: 0; }
.timestep { display: flex; width: 73px; height: 26px; background: #3c3f48; border-radius: 3px; overflow: hidden; }
.timestep input { flex: 1; padding: 1px 6px 0; color: #ccd4e0; }
.timestep svg { width: 13px; height: 28px; }
.stepbtns { display: flex; flex-direction: column; gap: 2px; }
.stepbtns button { width: 22px; height: 12px; background: linear-gradient(#717682, #62666f); border: 1px solid #33363d; border-radius: 2px; }
.stepbtns svg { width: 8px; height: 5px; fill: #9298a4; }
.status { height: 23px; flex: none; display: flex; align-items: center; gap: 7px; padding: 0 2px 0 4px; background: #4b4f5a; white-space: pre; color: #a9b3c2; border-bottom-right-radius: 6px; }

/* sky canvas */
.sky { flex: 1; min-height: 0; position: relative; background: #000; overflow: hidden; color: #c8d0dc; }
.map { position: absolute; inset: 0; width: 100%; height: 100%; }
.dots path { fill: none; stroke-linecap: round; stroke-width: 2px; vector-effect: non-scaling-stroke; }
.dots .w { stroke: #ddd; }
.dots .y { stroke: #b08a1c; stroke-width: 3px; }
.dots .g { stroke: #98a070; }
.dots .o { stroke: #b07a60; }
.dots .b { stroke: #3b86d8; stroke-width: 1.4px; }
.dots .c { stroke: #2f70b8; stroke-width: 2.6px; }
.dots .t { stroke: #6ab0b4; }
.dots .d { stroke: #38382e; }
.dots .f { stroke: #303030; stroke-width: 1.4px; }
.stars path { stroke-linecap: round; stroke-width: 4.4px; }
.names { font-size: 16px; }
.info { position: absolute; left: 4px; top: 6px; display: flex; gap: 13px; }
.focus { position: absolute; right: 170px; top: 6px; }
.place { position: absolute; left: 4px; bottom: 0; }

/* shared widgets */
.btn { height: 26px; color: #dbe2ec; background: linear-gradient(#727884, #60656f); border: 1px solid #353940; border-radius: 3px; box-shadow: inset 0 0 0 1px #7b818c; }
.btn:disabled { color: #6f747d; background: linear-gradient(#676c75, #5a5e67); }
.btn.dim { background: linear-gradient(#676c75, #595d66); box-shadow: inset 0 0 0 1px #6e737c; color: #c3cad5; }
.btn.flat { width: 30px; height: 30px; border-color: #7c90a6; box-shadow: none; }
.btn.tall, .drop.tall { height: 32px; }
.h30, .btn.h30, .spin.h30 { height: 30px; }
.w24 { width: 24px; } .w32 { width: 32px; } .w34 { width: 34px; } .w36 { width: 36px; } .w45 { width: 45px; } .w78 { width: 78px; } .w95 { width: 95px; } .w125 { width: 125px; }
.red { color: #c34a55; }
.row { display: flex; align-items: center; gap: 2px; white-space: nowrap; }
.ekos .row > input, .files > input { height: 26px; background: #3c3f48; border: 1px solid #353940; border-radius: 3px; padding: 0 2px; color: #ccd4e0; }
.ekos input::placeholder { color: #818894; opacity: 1; }
.ekos input:disabled { background: #373a42; }
.spin { position: relative; display: flex; height: 25px; min-width: 0; background: #3c3f48; border: 1px solid #353940; border-radius: 3px; color: #ccd4e0; }
.spin input { flex: 1; width: 0; padding: 0 4px; }
.spin svg { width: 13px; height: 100%; padding: 0 1px; background: #656a74; color: #8f959f; border-left: 1px solid #757a84; }
.spin .ibeam { position: absolute; left: 4px; top: 5px; width: 8px; height: 14px; padding: 0; background: none; border: 0; }
.drop { position: relative; display: flex; height: 26px; min-width: 0; }
.drop select { appearance: none; flex: 1; padding: 0 4px; color: #ccd6e6; background: linear-gradient(#727884, #5f646d); border: 1px solid #353940; border-radius: 3px; box-shadow: inset 0 0 0 1px #7b818c; opacity: 1; }
.drop.tall select { padding: 0 3px; }
.drop select:disabled { background: linear-gradient(#676c75, #565a62); }
.drop::after { content: ""; position: absolute; right: 7px; top: 50%; margin-top: -2px; border: 4px solid transparent; border-top-color: #a9b4c5; border-bottom: 0; pointer-events: none; }
.drop:has(:disabled)::after { border-top-color: #6a6f79; }
.chk { display: flex; align-items: center; gap: 5px; }
.chk input { appearance: none; width: 14px; height: 14px; background: #3c3f48; border: 1px solid #41454d; }
.box { border: 1px solid #626770; border-radius: 3px; }

/* mount control window */
.mount { position: absolute; left: 53px; top: 303px; width: 268px; border: 6px solid #2c2c2c; border-radius: 8px; background: #000; box-shadow: 0 4px 12px #000; color: #a9b9cc; }
.mount header { height: 30px; background: #222; color: #909293; display: flex; align-items: center; gap: 9px; padding: 0 9px 5px 10px; }
.mount h2 { flex: 1; text-align: center; white-space: nowrap; color: #808384; }
.mbody { padding: 5px 4px 3px 5px; display: flex; flex-direction: column; }
.pad { align-self: center; display: grid; grid-template-columns: repeat(3, 63px); gap: 1px; }
.pad svg { width: 63px; height: 50px; }
.arr { fill: none; stroke: #c2c2c2; stroke-width: 7; }
.stop { font: 700 21px Roboto, sans-serif; fill: #fff; text-anchor: middle; }
.reverse { display: flex; gap: 5px; padding: 4px 12px 0; height: 23px; line-height: 18px; }
.reverse label { display: flex; gap: 5px; align-items: center; color: #fff; }
.reverse input { appearance: none; width: 18px; height: 18px; border-radius: 3px; background: #fff; border: 1px solid #999; }
.speed { display: flex; align-items: center; gap: 26px; height: 30px; padding-left: 15px; color: #fff; font-size: 16px; }
.speed input { appearance: none; width: 140px; height: 14px; background: linear-gradient(#7f8ea6, #7f8ea6) center / 100% 3px no-repeat; }
.speed input::-webkit-slider-thumb { appearance: none; width: 12px; height: 14px; border-radius: 2px; background: #6d7280; border: 1px solid #8a90a0; }
.coords { display: grid; grid-template-columns: 28px 107px 31px 1fr; grid-auto-rows: 27px; align-items: center; color: #e8d21a; font-size: 15px; white-space: nowrap; }
.coords dt { font-size: 14px; font-weight: 700; color: #fff; }
.coords .mid { padding-left: 4px; }
.mtarget { display: flex; align-items: center; gap: 7px; margin-top: 11px; color: #fff; font-size: 19px; font-weight: 700; }
.mtarget input { flex: 1; width: 0; height: 31px; padding: 0 10px; border: 1px solid #6b5a22; border-radius: 4px; background: #111; font-size: 18px; }
.mtarget input::placeholder { color: #424242; }
.btn.sq { width: 27px; height: 26px; }
.mcoord { display: flex; align-items: center; margin-top: 5px; color: #fff; font-size: 19px; font-weight: 700; }
.mtarget + .mcoord { margin-top: 14px; }
.mcoord label { width: 46px; }
.mcoord input { flex: 1; width: 0; height: 32px; background: #222; text-align: center; font-size: 18px; }
.mcoord input::placeholder { color: #7d7d7d; }
.radios { display: flex; align-items: center; height: 23px; gap: 5px; }
.mcoord + .radios { margin-top: 2px; }
.radios > span { width: 41px; }
.radios label { display: flex; align-items: center; gap: 5px; color: #e4eaf2; }
.radios input { appearance: none; width: 18px; height: 18px; border-radius: 50%; background: #fff; border: 1px solid #888; }
.radios input:checked { background: radial-gradient(circle, #777 3px, #333 5px, #fff 6px); }
.mbtns { display: grid; grid-template-columns: 1fr 1fr; gap: 5px 6px; margin-top: 3px; }
.mstatus { display: flex; align-items: center; justify-content: space-between; margin-top: 6px; font-size: 16px; color: #fff; }

/* Ekos window */
.ekos { position: absolute; left: 596px; right: 25px; top: 23px; bottom: 14px; display: flex; flex-direction: column; padding: 0 6px 6px; background: #222; border-radius: 8px; box-shadow: 0 4px 14px #000; color: #afb9c8; }
.ekos > header { height: 36px; flex: none; display: grid; grid-template-columns: 1fr auto 1fr; align-items: center; padding: 0 9px 0 10px; color: #fff; }
.ekos h2 { font-weight: 700; }
.ekos .tb-buttons { gap: 9px; }
.ebody { flex: 1; min-height: 0; display: flex; flex-direction: column; padding: 3px; background: #4b4f5a; }
.tabs { display: flex; align-items: flex-end; height: 59px; flex: none; position: relative; z-index: 1; }
.tabs button { width: 76px; height: 55px; margin-bottom: 1px; padding: 0 4px 2px 0; background: #5f646c; border: 1px solid #3b3e46; border-bottom: 0; border-radius: 3px 3px 0 0; box-shadow: inset 1px 1px #747984; }
.tabs .sel { height: 59px; margin-bottom: 0; padding-bottom: 3px; background: linear-gradient(#6e747f, #676d76); }
.tabs svg { width: 48px; height: 48px; }
.pane { flex: 1; min-height: 0; display: flex; margin-top: -1px; padding: 10px 11px 10px 10px; background: #666c75; border: 1px solid #3b3e46; box-shadow: inset 0 0 0 1px #7c828d; }
.capture { width: 634px; flex: none; display: flex; flex-direction: column; }
.train { gap: 4px; }
.train .drop { margin-left: -1px; }
.ekos h3 { height: 26px; line-height: 26px; }
.cam { flex: 1; padding: 3px 4px 0 5px; }
.camera, .cooler, .files > label, .files .row > label { color: #afb9c8; }
.camera label, .cooler .lab { width: 51px; }
.cooler { margin: 2px 0 1px; }
.off { height: 32px; background: #800000; border: 1px solid #000; font-weight: 700; color: #fff; }
.cooler .temp { width: 26px; }
.cooler .chk { width: 38px; }
.half { width: 320px; height: 22px; line-height: 26px; display: flex; align-items: center; gap: 3px; white-space: nowrap; }
.ekos .half { font-weight: 700; }
.half::after { content: ""; flex: 1; height: 1px; background: #292c32; }
.settings { display: flex; gap: 3px; height: 207px; }
.form { width: 320px; display: grid; grid-template-columns: 64px minmax(0, 1fr); grid-template-rows: 30px 30px 29px 30px 30px 30px 30px; align-items: center; }
.form.second { flex: 1; width: 0; grid-template-columns: 44px minmax(0, 1fr); }
.pair { display: grid; grid-template-columns: 128px minmax(0, 1fr); gap: 2px; align-items: center; }
.pair label { display: flex; align-items: center; gap: 3px; }
.pair .spin { flex: 1; }
.gain > span:first-child { width: 50px; }
.grid6 { grid-column: 2; grid-row: 6 / 9; align-self: start; padding-top: 6px; display: grid; grid-template-columns: repeat(3, 1fr); gap: 8px 3px; }
.grid6 .btn { height: 30px; }
.files { display: grid; grid-template-columns: 62px minmax(0, 1fr); grid-template-rows: 30px 32px 33px 28px; align-items: center; }
.vsplit { width: 5px; align-self: center; height: 20px; border-right: 2px dotted #93a0b0; }

.queue { flex: 1; min-width: 0; display: flex; flex-direction: column; }
.queue > h3 { height: 24px; line-height: 24px; }
.queue > h3:first-child { height: 23px; line-height: 20px; }
.qbox { flex: 1; min-height: 0; display: flex; flex-direction: column; margin: 0 0 3px 1px; padding: 2px 3px; }
.qtools { display: flex; gap: 1px; }
.qtools .apart { margin-left: 20px; }
.qtable { flex: 1; min-height: 0; display: flex; flex-direction: column; margin-top: 1px; background: #3c3f48; border: 1px solid #2f3238; }
.clip { flex: 1; overflow: hidden; }
table { table-layout: fixed; width: 640px; border-collapse: collapse; }
th { width: 80px; height: 21px; padding: 2px 0 0; font-weight: 400; color: #ccd6e6; background: linear-gradient(#6b7079, #5f646d); border-right: 1px solid #868b95; border-bottom: 1px solid #3b3e46; }
.hscroll { height: 14px; display: flex; background: #5f646c; border-top: 1px solid #7a7f89; }
.hscroll svg { width: 14px; height: 13px; fill: #a5aab3; }
.hscroll span { flex: 1; margin-right: 73px; background: #6a6f79; border: solid #444851; border-width: 0 1px; }
.qrun { display: flex; align-items: center; gap: 2px; }
.tools { display: flex; align-items: center; gap: 2px; padding: 3px 10px 3px 4px; margin-bottom: 2px; }
.tools .btn { width: 80px; }
.progress { height: 129px; border: 1px solid #22252a; padding: 12px 9px 9px 10px; }
.phead { display: flex; align-items: center; gap: 6px; height: 23px; }
.phead b { flex: 1; }
.led { width: 14px; height: 14px; border-radius: 50%; background: #95989b; border: 2px solid #50545a; }
.pline { display: flex; height: 25px; align-items: flex-end; }
.pline span:first-child { width: 139px; }
.bar { height: 26px; margin-top: 7px; background: #34363e; border: 1px solid #2d2f36; border-radius: 3px; }
.hsplit { width: 15px; height: 2px; margin: 1px 0 2px 5px; align-self: center; flex: none; background: repeating-linear-gradient(90deg, #9aa0aa 0 2px, transparent 2px 3px); }
.logrow { display: flex; gap: 7px; height: 102px; flex: none; }
.log { flex: 1; background: #3c3f48; border: 1px solid #373a42; }
.logbtns { width: 79px; display: flex; flex-direction: column; justify-content: flex-end; gap: 6px; }
```
